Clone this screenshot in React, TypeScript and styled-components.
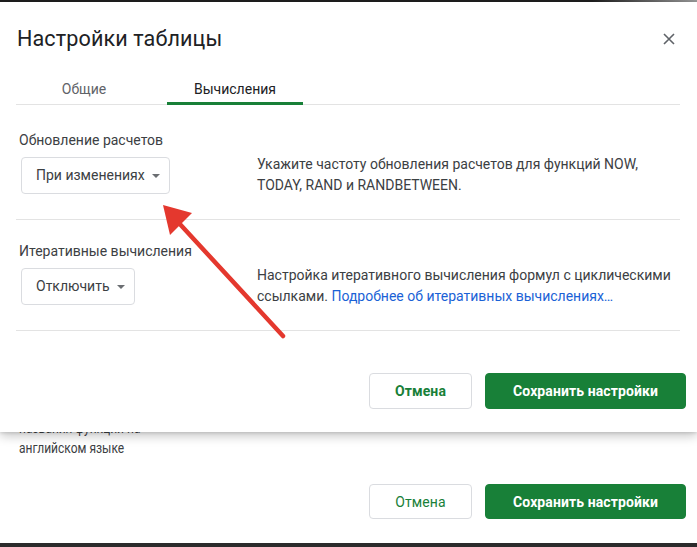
import React from "react";
import styled, { createGlobalStyle } from "styled-components";

const Global = createGlobalStyle`
  html, body { margin: 0; padding: 0; background: #ffffff; }
  body { font-family: Roboto, "Noto Sans", Arial, sans-serif; color: #3c4043; }
  * { box-sizing: border-box; }
`;

const Page = styled.div`
  position: relative;
  width: 697px;
  height: 547px;
  overflow: hidden;
  display: flex;
  flex-direction: column;
  background: #ffffff;
`;

const TopStrip = styled.div`
  height: 2px;
  background: linear-gradient(90deg, #1f1f1f 0%, #1f1f1f 85%, #9a9a9a 100%);
  flex: none;
`;

const BackContent = styled.div`
  padding: 416px 11px 0 19px;
  display: flex;
  flex-direction: column;
  flex: 1;
`;

const BackText = styled.div`
  font-size: 15px;
  line-height: 20px;
  color: #3c4043;
  transform: scaleX(0.8);
  transform-origin: left center;
  white-space: nowrap;
`;

const BackFooter = styled.div`
  margin-top: 26px;
  display: flex;
  justify-content: flex-end;
  gap: 13px;
`;

const BottomBar = styled.div`
  margin-top: auto;
  height: 4px;
  background: #2b2b2b;
  flex: none;
`;

const Dialog = styled.div`
  position: absolute;
  top: 2px;
  left: 0;
  right: 0;
  height: 430px;
  background: #ffffff;
  padding: 23px 11px 0 16px;
  box-shadow: 0 4px 10px rgba(0, 0, 0, 0.22), 0 1px 3px rgba(0, 0, 0, 0.12);
  display: flex;
  flex-direction: column;
  z-index: 2;
`;

const Header = styled.div`
  display: flex;
  align-items: center;
  justify-content: space-between;
  height: 28px;
  padding-right: 10px;
`;

const Title = styled.h1`
  margin: 0 0 0 1px;
  font-size: 21.6px;
  font-weight: 400;
  line-height: 28px;
  color: #202124;
  letter-spacing: 0.1px;
`;

const CloseButton = styled.button`
  border: none;
  background: none;
  padding: 0;
  width: 14px;
  height: 14px;
  display: flex;
  align-items: center;
  justify-content: center;
  cursor: pointer;
`;

const TabBar = styled.div`
  margin-top: 18px;
  margin-right: 6px;
  display: flex;
  gap: 15px;
  height: 34px;
  border-bottom: 1px solid #e3e3e3;
`;

const Tab = styled.div<{ $active?: boolean }>`
  width: 136px;
  height: 34px;
  padding-top: 8px;
  text-align: center;
  font-size: 14px;
  line-height: 20px;
  color: ${(p) => (p.$active ? "#202124" : "#5f6368")};
  border-bottom: 3px solid ${(p) => (p.$active ? "#188038" : "transparent")};
  margin-bottom: -1px;
`;

const Section = styled.div<{ $top: number }>`
  margin-right: 6px;
  padding: ${(p) => p.$top}px 0 23px 3px;
  border-bottom: 1px solid #e3e3e3;
`;

const Label = styled.div`
  font-size: 14px;
  line-height: 20px;
  color: #3c4043;
`;

const Row = styled.div`
  margin-top: 4px;
  display: grid;
  grid-template-columns: 238px 1fr;
  align-items: center;
`;

const Select = styled.div`
  margin-left: 2px;
  justify-self: start;
  height: 37px;
  padding: 0 9px 0 14px;
  border: 1px solid #dadce0;
  border-radius: 4px;
  display: flex;
  align-items: center;
  gap: 7px;
  font-size: 14px;
  color: #3c4043;
`;

const Caret = styled.span`
  width: 0;
  height: 0;
  border-left: 4px solid transparent;
  border-right: 4px solid transparent;
  border-top: 4px solid #6b6e72;
  margin-top: 1px;
`;

const Description = styled.div`
  font-size: 14px;
  line-height: 21px;
  color: #3c4043;
`;

const Link = styled.a`
  color: #1a62d6;
  text-decoration: none;
`;

const Footer = styled.div`
  margin-top: 42px;
  display: flex;
  justify-content: flex-end;
  gap: 13px;
`;

const Button = styled.button<{ $primary?: boolean }>`
  height: 36px;
  width: ${(p) => (p.$primary ? "201px" : "103px")};
  border-radius: 4px;
  font-family: Roboto, "Noto Sans", Arial, sans-serif;
  font-size: 14px;
  font-weight: 700;
  letter-spacing: 0.1px;
  cursor: pointer;
  border: 1px solid ${(p) => (p.$primary ? "#188038" : "#dadce0")};
  background: ${(p) => (p.$primary ? "#188038" : "#ffffff")};
  color: ${(p) => (p.$primary ? "#ffffff" : "#188038")};
`;

const BackButton = styled(Button)`
  height: 35px;
  font-weight: ${(p) => (p.$primary ? 700 : 400)};
`;

const ArrowLayer = styled.svg`
  position: absolute;
  left: 0;
  top: 0;
  width: 697px;
  height: 547px;
  pointer-events: none;
  z-index: 3;
`;

export default function App() {
  return (
    <>
      <Global />
      <Page>
        <TopStrip />
        <BackContent>
          <BackText>названия функций на</BackText>
          <BackText>английском языке</BackText>
          <BackFooter>
            <BackButton>Отмена</BackButton>
            <BackButton $primary>Сохранить настройки</BackButton>
          </BackFooter>
        </BackContent>
        <BottomBar />

        <Dialog>
          <Header>
            <Title>Настройки таблицы</Title>
            <CloseButton aria-label="Закрыть">
              <svg width="12" height="12" viewBox="0 0 12 12">
                <path d="M1 1 L11 11 M11 1 L1 11" stroke="#5f6368" strokeWidth="1.6" fill="none" />
              </svg>
            </CloseButton>
          </Header>
          <TabBar>
            <Tab>Общие</Tab>
            <Tab $active>Вычисления</Tab>
          </TabBar>
          <Section $top={25}>
            <Label>Обновление расчетов</Label>
            <Row>
              <Select>
                При изменениях
                <Caret />
              </Select>
              <Description>
                Укажите частоту обновления расчетов для функций NOW,
                <br />
                TODAY, RAND и RANDBETWEEN.
              </Description>
            </Row>
          </Section>
          <Section $top={21}>
            <Label>Итеративные вычисления</Label>
            <Row>
              <Select>
                Отключить
                <Caret />
              </Select>
              <Description>
                Настройка итеративного вычисления формул с циклическими
                <br />
                ссылками. <Link href="#">Подробнее об итеративных вычислениях…</Link>
              </Description>
            </Row>
          </Section>
          <Footer>
            <Button>Отмена</Button>
            <Button $primary>Сохранить настройки</Button>
          </Footer>
        </Dialog>

        <ArrowLayer viewBox="0 0 697 547">
          <line x1="283" y1="336" x2="178" y2="222" stroke="#e4382e" strokeWidth="4.5" strokeLinecap="round" />
          <polygon points="163,205 192,213 170,235" fill="#e4382e" />
        </ArrowLayer>
      </Page>
    </>
  );
}
